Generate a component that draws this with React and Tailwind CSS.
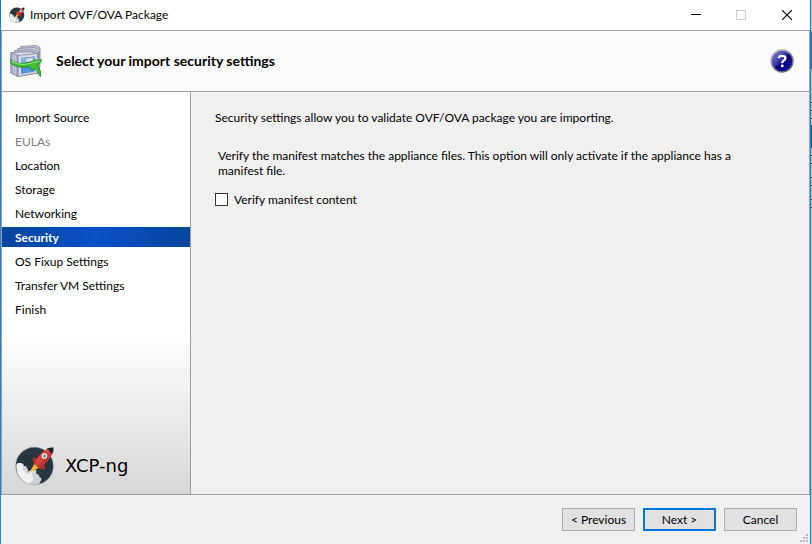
import React from "react";

const steps = [
  { name: "Import Source" },
  { name: "EULAs", disabled: true },
  { name: "Location" },
  { name: "Storage" },
  { name: "Networking" },
  { name: "Security", current: true },
  { name: "OS Fixup Settings" },
  { name: "Transfer VM Settings" },
  { name: "Finish" },
];

function RocketLogo({ className }) {
  return (
    <svg viewBox="0 0 40 40" className={className} aria-hidden="true">
      <circle cx="19.5" cy="20" r="18.8" fill="#263640" stroke="#8b9296" strokeWidth="0.5" />
      <path d="M1.5 18 Q3 16.5 6 17 Q9 17.500 9 20 Q12 19.500 12 22 Q14 24 12.500 26 L18 22.500 L21.500 24.500 Q21 26 21.500 28 Q24 28 24.500 31 Q27.500 32 26 34.500 L24 38 Q14 41 6.500 33.500 Q0 27 1.500 18Z" fill="#cfd0d4" />
      <path d="M2 18 Q5 16 7 18 Q9 21 7.500 24 Q11 25 12 28.500 L18.500 24 L17 29 Q19 32 17.500 35 L13 37.500 Q0.500 31 2 18Z" fill="#f0f0f1" />
      <path d="M20 16.500 L24 21 Q22 23.500 19.500 24 L15 27 L17 22Z" fill="#f4b63a" />
      <path d="M24 11 L20.500 12.500 Q19.500 10.500 18 12 Q17 14.500 19 15.500 Q17 17 18.500 18.500 L22 19 L24 22 Q25 24.500 27 22.500 Q29 25 30 23 Q31 21 29 20.500 L30 17Z" fill="#b0302d" />
      <path d="M19.500 18.500 Q22 9 32.500 2.500 L37.500 7.500 Q33 17.500 23.500 21.500Z" fill="#d9463f" />
      <path d="M37 7 Q33 17 23.500 21.500 L21.500 20 Q31 14 35 5Z" fill="#bd3835" />
      <path d="M32 2.500 Q35 1.200 38.500 1.500 Q39 5 37.300 8Z" fill="#18242d" />
      <circle cx="29.500" cy="10" r="2.700" fill="#f0f3f3" />
      <circle cx="29.500" cy="10" r="1.500" fill="#528d9c" />
    </svg>
  );
}

function PackageIcon() {
  return (
    <svg viewBox="0 0 32 32" className="size-8" aria-hidden="true">
      <g stroke="#85889f" strokeWidth="0.8" strokeLinejoin="round">
        <path d="M10.500 1.500 L26 0.500 L30 2.500 V22 L14 26Z" fill="#c3c5d3" />
        <path d="M7.500 3.500 L24 2.500 L29.500 4.500 V24 L11 28Z" fill="#d3d5e0" />
        <path d="M4.500 5.500 L22 4.500 L28.500 6.500 V26 L8 29.500Z" fill="#bfc1d1" />
        <path d="M1 7.500 L20 6.500 L27.500 8.500 V28 L8 31.500 L1 28Z" fill="#d3d5e0" />
        <path d="M1 7.500 L8 10.500 V31.500 L1 28Z" fill="#a6a9c1" />
        <path d="M3.300 8.700 V29 M5.700 9.700 V30.200" fill="none" stroke="#dcdde8" />
        <path d="M8 10.500 L27.500 8.500 V28 L8 31.500Z" fill="#d6d8e4" />
      </g>
      <path d="M11 13 L25 11.500 V26.500 L11 29Z" fill="#4f95de" />
      <path d="M11 13 L25 11.500 V15 L11 19Z" fill="#7fb2ea" />
      <path d="M16 13.500 L23 12.700 V16.500 L16 17.300Z" fill="#dfe3ec" stroke="#8c93a8" strokeWidth="0.5" />
      <path d="M0.400 14.500 Q7 19.500 15 18.200 L22.500 16.500 L25 14.200 L27 16 L31.500 14.500 Q31.500 17.500 27.500 19.500 L28 21.500 Q31.500 25.500 30.500 31.500 L28 28.500 Q27.500 25 24 23.800 L22 25.500 L19.500 21.500 Q8 24 1 18.500Z" fill="#42bb35" stroke="#20861f" strokeWidth="0.8" strokeLinejoin="round" />
      <path d="M1.500 16 Q8 20.500 17 19 L24.500 17.300 L30 16" fill="none" stroke="#8ce678" strokeWidth="1.100" />
    </svg>
  );
}

function HelpIcon() {
  return (
    <svg viewBox="0 0 24 24" className="size-6" aria-hidden="true">
      <defs>
        <linearGradient id="helpFill" x1="0" y1="0" x2="1" y2="1">
          <stop offset="0.100" stopColor="#8587cc" />
          <stop offset="0.480" stopColor="#2a2a9c" />
          <stop offset="0.520" stopColor="#00007a" />
          <stop offset="1" stopColor="#1a1aa8" />
        </linearGradient>
        <linearGradient id="helpRim" x1="0" y1="0" x2="1" y2="1">
          <stop offset="0" stopColor="#c9c9cc" />
          <stop offset="1" stopColor="#5a5a66" />
        </linearGradient>
      </defs>
      <circle cx="12" cy="12" r="11" fill="url(#helpFill)" stroke="url(#helpRim)" strokeWidth="1.400" />
      <path d="M8.800 9.200 Q9 6.800 12.200 6.800 Q15.400 6.800 15.400 9.300 Q15.400 10.800 13.500 11.700 Q12.200 12.400 12.200 14.300" fill="none" stroke="#fff" strokeWidth="2.300" />
      <rect x="11" y="15.600" width="2.500" height="2.500" fill="#fff" />
    </svg>
  );
}

function TitleBar() {
  return (
    <header className="flex h-[30px] shrink-0 items-center bg-white pl-2">
      <RocketLogo className="size-4" />
      <h1 className="ml-[5px] flex-1 leading-4">Import OVF/OVA Package</h1>
      <button aria-label="Minimize" className="flex h-full w-[45px] items-center justify-center">
        <svg viewBox="0 0 10 10" className="size-[10px]" shapeRendering="crispEdges"><path d="M0 4h10v1H0z" /></svg>
      </button>
      <button aria-label="Maximize" disabled className="flex h-full w-[45px] items-center justify-center">
        <svg viewBox="0 0 10 10" className="size-[10px]" shapeRendering="crispEdges"><path d="M0 0h10v10H0z M1 1v8h8V1z" fillRule="evenodd" fill="#ccc" /></svg>
      </button>
      <button aria-label="Close" className="flex h-full w-[47px] items-center justify-center">
        <svg viewBox="0 0 10 10" className="size-[10px]"><path d="M0 0L10 10M10 0L0 10" stroke="#000" strokeWidth="1.100" /></svg>
      </button>
    </header>
  );
}

export default function App() {
  return (
    <div className="flex h-screen overflow-hidden bg-[#f0f0f0] font-['Lato','Open_Sans',sans-serif] text-[12px] leading-[15px] text-black">
      <div className="flex min-w-0 flex-1 flex-col border-x border-[#1883d7]">
        <TitleBar />
        <div className="flex min-h-0 flex-1 flex-col border-t border-[#a0a0a0]">
          <section className="flex h-[60px] shrink-0 items-center border-x border-[#a0a0a0] bg-[#fbfbfb] pr-[15px] pl-2">
            <PackageIcon />
            <h2 className="ml-[14px] flex-1 text-[14px] leading-5 font-bold">Select your import security settings</h2>
            <button aria-label="Help"><HelpIcon /></button>
          </section>
          <div className="flex min-h-0 flex-1 border border-[#a0a0a0]">
            <nav className="flex w-[189px] shrink-0 flex-col border-r border-[#a0a0a0] bg-linear-to-b from-white from-60% to-[#d7d7d7]">
              <ol className="flex flex-1 flex-col gap-1 pt-[15px] leading-[18px]">
                {steps.map((step) => (
                  <li
                    key={step.name}
                    aria-current={step.current ? "step" : undefined}
                    className={
                      step.current
                        ? "bg-linear-to-r from-[#06469d] via-[#0a50c8] to-[#06469d] pt-[2px] pl-[13px] font-bold text-white"
                        : step.disabled
                          ? "pt-[2px] pl-[13px] text-[#808080]"
                          : "pt-[2px] pl-[13px]"
                    }
                  >
                    {step.name}
                  </li>
                ))}
              </ol>
              <div className="flex items-center gap-[10px] pb-2 pl-[13px]">
                <RocketLogo className="size-10" />
                <span className="font-['DejaVu_Sans',sans-serif] text-[18px] leading-6">XCP-ng</span>
              </div>
            </nav>
            <main className="flex-1 px-6 pt-[18px]">
              <p>Security settings allow you to validate OVF/OVA package you are importing.</p>
              <p className="mt-[23px] max-w-[540px] pl-[3px]">
                Verify the manifest matches the appliance files. This option will only activate if the appliance has a manifest file.
              </p>
              <label className="mt-[14px] flex items-center gap-[6px]">
                <input type="checkbox" className="size-[13px] appearance-none border border-[#333] bg-white" />
                Verify manifest content
              </label>
            </main>
          </div>
        </div>
        <footer className="relative flex h-[49px] shrink-0 items-center justify-end gap-2 pr-[13px]">
          <button className="h-[23px] w-[73px] border border-[#adadad] bg-[#e1e1e1]">&lt; Previous</button>
          <button className="h-[23px] w-[73px] border-2 border-[#0078d7] bg-[#e1e1e1]">Next &gt;</button>
          <button className="h-[23px] w-[73px] border border-[#adadad] bg-[#e1e1e1]">Cancel</button>
          <svg viewBox="0 0 8 8" className="absolute right-[2px] bottom-[2px] size-2" fill="#bfbfbf" shapeRendering="crispEdges" aria-hidden="true">
            <path d="M6 0h2v2H6z M3 3h2v2H3z M6 3h2v2H6z M0 6h2v2H0z M3 6h2v2H3z M6 6h2v2H6z" />
          </svg>
        </footer>
      </div>
      <div className="flex w-px shrink-0 flex-col bg-[#a9cdea]" aria-hidden="true">
        <div className="mt-8 h-[37px] bg-[#1b6c96]" />
        <div className="mt-[33px] h-px bg-black" />
        <div className="mt-[7px] h-px bg-black" />
        <div className="mt-[7px] h-px bg-black" />
        <div className="mt-[6px] h-[23px] bg-[#005a9e]" />
        <div className="mt-[7px] h-px bg-black" />
        <div className="mt-[7px] h-px bg-black" />
        <div className="mt-[13px] h-px bg-black" />
        <div className="mt-[7px] h-px bg-black" />
        <div className="mt-[13px] h-px bg-black" />
        <div className="mt-[7px] h-px bg-black" />
      </div>
    </div>
  );
}
